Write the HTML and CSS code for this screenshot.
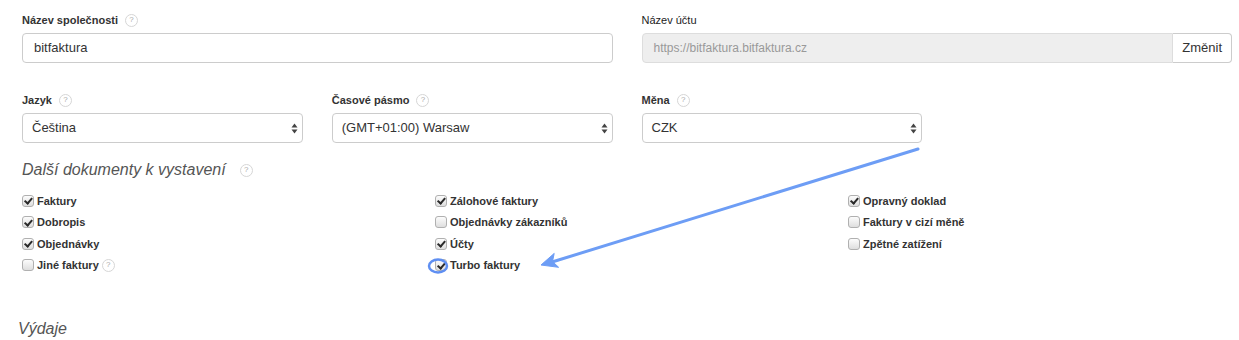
FILE: index.html
```html
<!DOCTYPE html>
<html>
<head>
  <meta charset="UTF-8">
  <title>Nastavení účtu</title>
  <link rel="stylesheet" href="styles.css">
</head>
<body>
<div class="page">
  <div class="grid top-row">
    <div class="field span2">
      <label class="lbl">Název společnosti <span class="help">?</span></label>
      <div class="input">bitfaktura</div>
    </div>
    <div class="field span2">
      <label class="lbl lbl-light">Název účtu</label>
      <div class="group">
        <div class="input disabled">https://bitfaktura.bitfaktura.cz</div>
        <div class="btn">Změnit</div>
      </div>
    </div>
  </div>

  <div class="grid second-row">
    <div class="field">
      <label class="lbl">Jazyk <span class="help">?</span></label>
      <div class="input select">Čeština
        <svg class="arrows" width="7" height="11" viewBox="0 0 7 11"><path d="M3.5 0.5 L6.5 4.5 L0.5 4.5 Z M3.5 10.5 L6.5 6.5 L0.5 6.5 Z" fill="#444"/></svg>
      </div>
    </div>
    <div class="field">
      <label class="lbl">Časové pásmo <span class="help">?</span></label>
      <div class="input select">(GMT+01:00) Warsaw
        <svg class="arrows" width="7" height="11" viewBox="0 0 7 11"><path d="M3.5 0.5 L6.5 4.5 L0.5 4.5 Z M3.5 10.5 L6.5 6.5 L0.5 6.5 Z" fill="#444"/></svg>
      </div>
    </div>
    <div class="field">
      <label class="lbl">Měna <span class="help">?</span></label>
      <div class="input select">CZK
        <svg class="arrows" width="7" height="11" viewBox="0 0 7 11"><path d="M3.5 0.5 L6.5 4.5 L0.5 4.5 Z M3.5 10.5 L6.5 6.5 L0.5 6.5 Z" fill="#444"/></svg>
      </div>
    </div>
  </div>

  <h3 class="section">Další dokumenty k vystavení <span class="help">?</span></h3>

  <div class="checks">
    <div class="col">
      <div class="check"><span class="cb on"></span>Faktury</div>
      <div class="check"><span class="cb on"></span>Dobropis</div>
      <div class="check"><span class="cb on"></span>Objednávky</div>
      <div class="check"><span class="cb"></span>Jiné faktury <span class="help">?</span></div>
    </div>
    <div class="col">
      <div class="check"><span class="cb on"></span>Zálohové faktury</div>
      <div class="check"><span class="cb"></span>Objednávky zákazníků</div>
      <div class="check"><span class="cb on"></span>Účty</div>
      <div class="check"><span class="cb on"></span>Turbo faktury</div>
    </div>
    <div class="col">
      <div class="check"><span class="cb on"></span>Opravný doklad</div>
      <div class="check"><span class="cb"></span>Faktury v cizí měně</div>
      <div class="check"><span class="cb"></span>Zpětné zatížení</div>
    </div>
  </div>

  <h3 class="section expenses">Výdaje</h3>
</div>

<svg class="overlay" width="1239" height="340" viewBox="0 0 1239 340">
  <line x1="918" y1="149" x2="552" y2="262" stroke="#6d9df5" stroke-width="3" stroke-linecap="round"/>
  <polygon points="541,265 558.6,267.3 552.5,261.5 554.2,253.4" fill="#6d9df5" stroke="#6d9df5" stroke-width="1" stroke-linejoin="round"/>
  <ellipse cx="438" cy="266" rx="9" ry="6.5" fill="none" stroke="#5f8ff2" stroke-width="2.5"/>
</svg>
</body>
</html>
```

FILE: styles.css
```css
body { margin: 0; font-family: "Liberation Sans", Arial, sans-serif; color: #333; background: #fff; }
.page { padding: 13px 7px 0 22px; }

.grid { display: grid; grid-template-columns: repeat(4, 1fr); column-gap: 29px; }
.span2 { grid-column: span 2; }
.second-row { margin-top: 30px; }

.lbl { display: flex; align-items: center; height: 14px; margin-bottom: 6px; font-size: 11px; font-weight: bold; color: #333; }
.lbl-light { font-weight: normal; color: #222; }

.help { display: inline-flex; align-items: center; justify-content: center; width: 11px; height: 11px; margin-left: 7px; border: 1px solid #d6d6d6; border-radius: 50%; font-size: 8px; font-weight: normal; font-style: normal; color: #aaa; line-height: 1; }

.input { position: relative; box-sizing: border-box; height: 30px; padding: 0 11px; border: 1px solid #ccc; border-radius: 4px; font-size: 13px; line-height: 28px; color: #333; background: #fff; }
.input.disabled { flex: 1; background: #eee; color: #999; border-color: #ddd; border-radius: 4px 0 0 4px; font-size: 12px; }
.group { display: flex; }
.btn { box-sizing: border-box; height: 30px; padding: 0 9px; border: 1px solid #ccc; border-left: none; border-radius: 0 4px 4px 0; font-size: 13px; line-height: 28px; color: #333; background: #fff; }

.select { padding-left: 9px; }
.arrows { position: absolute; right: 4px; top: 9px; }

.section { margin: 17px 0 0; font-size: 16px; font-weight: normal; font-style: italic; line-height: 20px; color: #555; display: flex; align-items: center; }
.section .help { margin-left: 14px; }

.checks { display: grid; grid-template-columns: repeat(3, 413px); margin-top: 10px; }
.check { display: flex; align-items: center; height: 21.5px; font-size: 11px; font-weight: bold; color: #333; }
.check .help { margin-left: 3px; }
.cb { box-sizing: border-box; width: 12px; height: 12px; margin-right: 3px; border: 1px solid #b0b0b0; border-radius: 3px; background: linear-gradient(#fcfcfc, #dedede); position: relative; }
.cb.on::after { content: ""; position: absolute; left: 3px; top: 0.5px; width: 2.5px; height: 6px; border: solid #2a2a2a; border-width: 0 2px 2px 0; transform: rotate(40deg); }

.expenses { margin: 43px 0 0 -4px; }

.overlay { position: absolute; left: 0; top: 0; pointer-events: none; }
```
